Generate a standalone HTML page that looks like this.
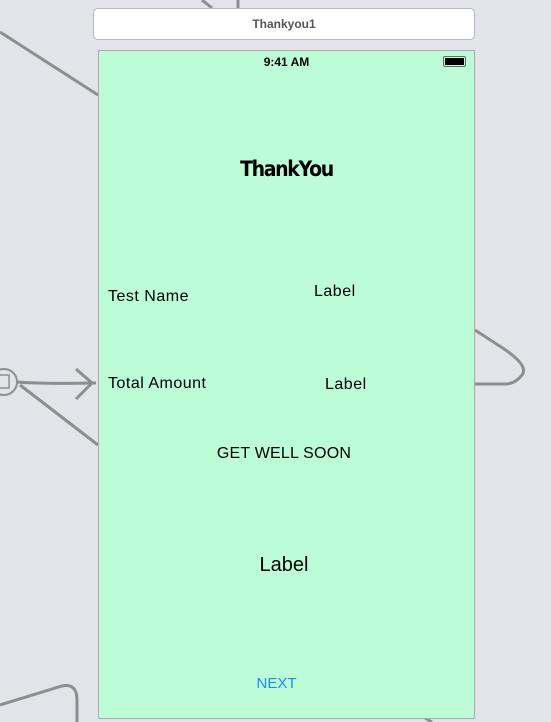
<!DOCTYPE html>
<html><head><style>
body{margin:0;width:551px;height:722px;background:#e3e4e8;position:relative;overflow:hidden;font-family:"Liberation Sans",sans-serif}
svg{position:absolute;left:0;top:0}
.hdr{position:absolute;left:93px;top:8px;width:380px;height:30px;background:#fff;border:1px solid #b8b8bc;border-radius:5px;text-align:center;line-height:30px;font-size:12px;font-weight:bold;color:#555}
.scene{position:absolute;left:98px;top:50px;width:375px;height:667px;background:#bcfdd8;border:1px solid #aaa}
.t{position:absolute;color:#000;white-space:nowrap}
.s{letter-spacing:0.5px}
</style></head><body>
<svg width="551" height="722">
<g stroke="#8e8e90" stroke-width="3" fill="none">
<line x1="0" y1="32" x2="98" y2="95"/>
<line x1="202" y1="0" x2="212" y2="8"/>
<line x1="238" y1="0" x2="238" y2="8"/>
<path d="M18 382 Q40 384 96 383"/>
<path d="M76 369 L92 383 L76 399"/>
<line x1="20" y1="385" x2="98" y2="445"/>
<path d="M475 330 L498 345 Q530 365 522 375 Q515 384 505 384 L475 384"/>
<path d="M0 705 L62 686 Q77 683 77 700 L77 722"/>
<line x1="425" y1="718" x2="432" y2="722"/>
</g>
<circle cx="4" cy="382" r="13" fill="#e3e4e8" stroke="#8e8e90" stroke-width="2"/>
<rect x="-2" y="375" width="11" height="13" fill="none" stroke="#8e8e90" stroke-width="1.5"/>
</svg>
<div class="hdr">Thankyou1</div>
<div class="scene">
<div class="t" style="left:0;width:375px;text-align:center;top:4px;font-size:12px;font-weight:bold">9:41 AM</div>
<div style="position:absolute;left:344px;top:5px;width:21px;height:9px;border:1px solid #666;border-radius:2px"><div style="margin:1px;height:7px;background:#000"></div></div>
<div class="t" style="left:0;width:375px;text-align:center;top:106px;font-size:21px;font-weight:bold;font-family:'DejaVu Sans',sans-serif;letter-spacing:-1.5px;transform:scaleX(0.9)">ThankYou</div>
<div class="t s" style="left:9px;top:237px;font-size:16px">Test Name</div>
<div class="t s" style="left:215px;top:232px;font-size:16px">Label</div>
<div class="t s" style="left:9px;top:324px;font-size:16px">Total Amount</div>
<div class="t s" style="left:226px;top:325px;font-size:16px">Label</div>
<div class="t" style="left:0;width:370px;text-align:center;top:394px;font-size:16px;letter-spacing:0.2px">GET WELL SOON</div>
<div class="t" style="left:0;width:370px;text-align:center;top:503px;font-size:20px">Label</div>
<div class="t" style="left:0;width:355px;text-align:center;top:624px;font-size:15px;color:#1a8cff">NEXT</div>
</div>
</body></html>
